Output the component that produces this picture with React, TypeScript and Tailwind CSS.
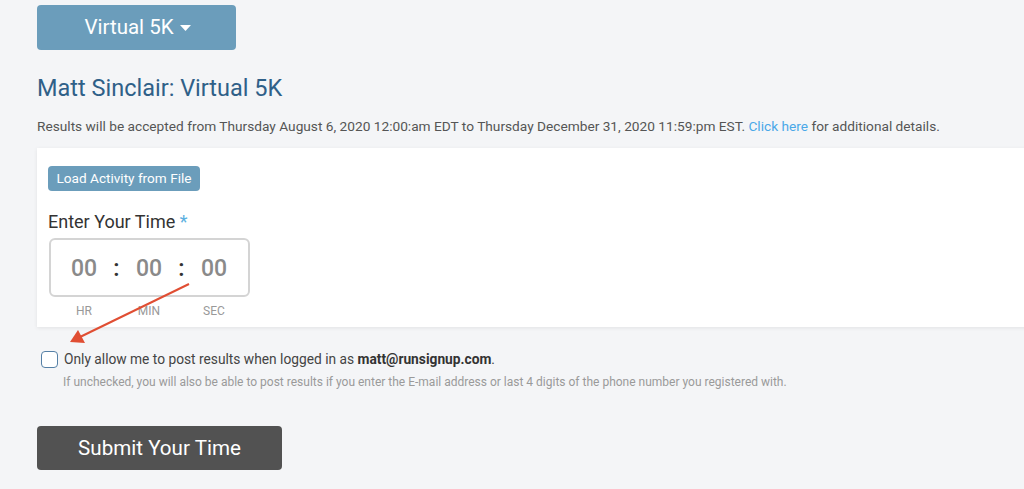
export default function App() {
  return (
    <div className="relative min-h-[489px] overflow-hidden bg-[#f4f5f7] pl-[37px] font-['Roboto',sans-serif]">
      <div className="pt-[5px]">
        <button className="flex h-[45px] w-[199px] items-center justify-center gap-[6px] rounded-[4px] bg-[#6b9dbb] pl-[2px] text-[20.5px] text-white">
          Virtual 5K
          <svg width="11" height="6" viewBox="0 0 11 6" className="mt-[1px]">
            <path d="M0 0h11L5.5 6z" fill="#fff" />
          </svg>
        </button>
      </div>

      <h1 className="mt-[24px] text-[23.5px] leading-[28px] text-[#2f6088]">Matt Sinclair: Virtual 5K</h1>
      <p className="mt-[15px] text-[13.7px] leading-[18px] text-[#555]">
        Results will be accepted from Thursday August 6, 2020 12:00:am EDT to Thursday December 31, 2020 11:59:pm EST.{' '}
        <span className="text-[#4aa8e8]">Click here</span> for additional details.
      </p>

      <div className="-mr-[40px] mt-[13px] bg-white pb-[9px] pl-[11px] pt-[18px] shadow-[0_1px_4px_rgba(0,0,0,0.08)]">
        <button className="h-[25px] w-[152px] rounded-[4px] bg-[#6b9dbb] text-[13.6px] text-white">
          Load Activity from File
        </button>
        <div className="mt-[20px] text-[18px] leading-[22px] text-[#333]">
          Enter Your Time <span className="text-[#5aafe0]">*</span>
        </div>
        <div className="ml-[1px] mt-[5px] flex h-[59px] w-[201px] items-center rounded-[6px] border-2 border-[#d4d4d4] pl-[10px] pt-[3px] text-[23px] font-medium text-[#8a8a8a]">
          <span className="w-[46px] text-center">00</span>
          <span className="w-[19px] text-center font-semibold text-[#333]">:</span>
          <span className="w-[46px] text-center">00</span>
          <span className="w-[19px] text-center font-semibold text-[#333]">:</span>
          <span className="w-[46px] text-center">00</span>
        </div>
        <div className="ml-[1px] mt-[7px] flex pl-[12px] text-[12px] leading-[14px] text-[#999]">
          <span className="w-[46px] text-center">HR</span>
          <span className="w-[19px]" />
          <span className="w-[46px] text-center">MIN</span>
          <span className="w-[19px]" />
          <span className="w-[46px] text-center">SEC</span>
        </div>
      </div>

      <div className="mt-[23px] flex items-center gap-[6px] pl-[4px]">
        <span className="h-[17px] w-[17px] rounded-[4px] border-[1.5px] border-[#5580a6] bg-white" />
        <span className="text-[13.75px] leading-[18px] text-[#444]">
          Only allow me to post results when logged in as <b className="font-bold text-[#333]">matt@runsignup.com</b>.
        </span>
      </div>
      <p className="mt-[6px] pl-[26px] text-[12px] leading-[16px] text-[#9a9a9a]">
        If unchecked, you will also be able to post results if you enter the E-mail address or last 4 digits of the phone number you registered with.
      </p>

      <button className="mt-[36px] h-[44px] w-[245px] rounded-[4px] bg-[#525252] text-[20.6px] text-white">
        Submit Your Time
      </button>

      <svg className="absolute left-0 top-0" width="220" height="360" viewBox="0 0 220 360">
        <line x1="189" y1="284" x2="80" y2="337" stroke="#e04e33" strokeWidth="2" />
        <path d="M70 342 L78 330 L85 343 Z" fill="#e04e33" />
      </svg>
    </div>
  )
}
